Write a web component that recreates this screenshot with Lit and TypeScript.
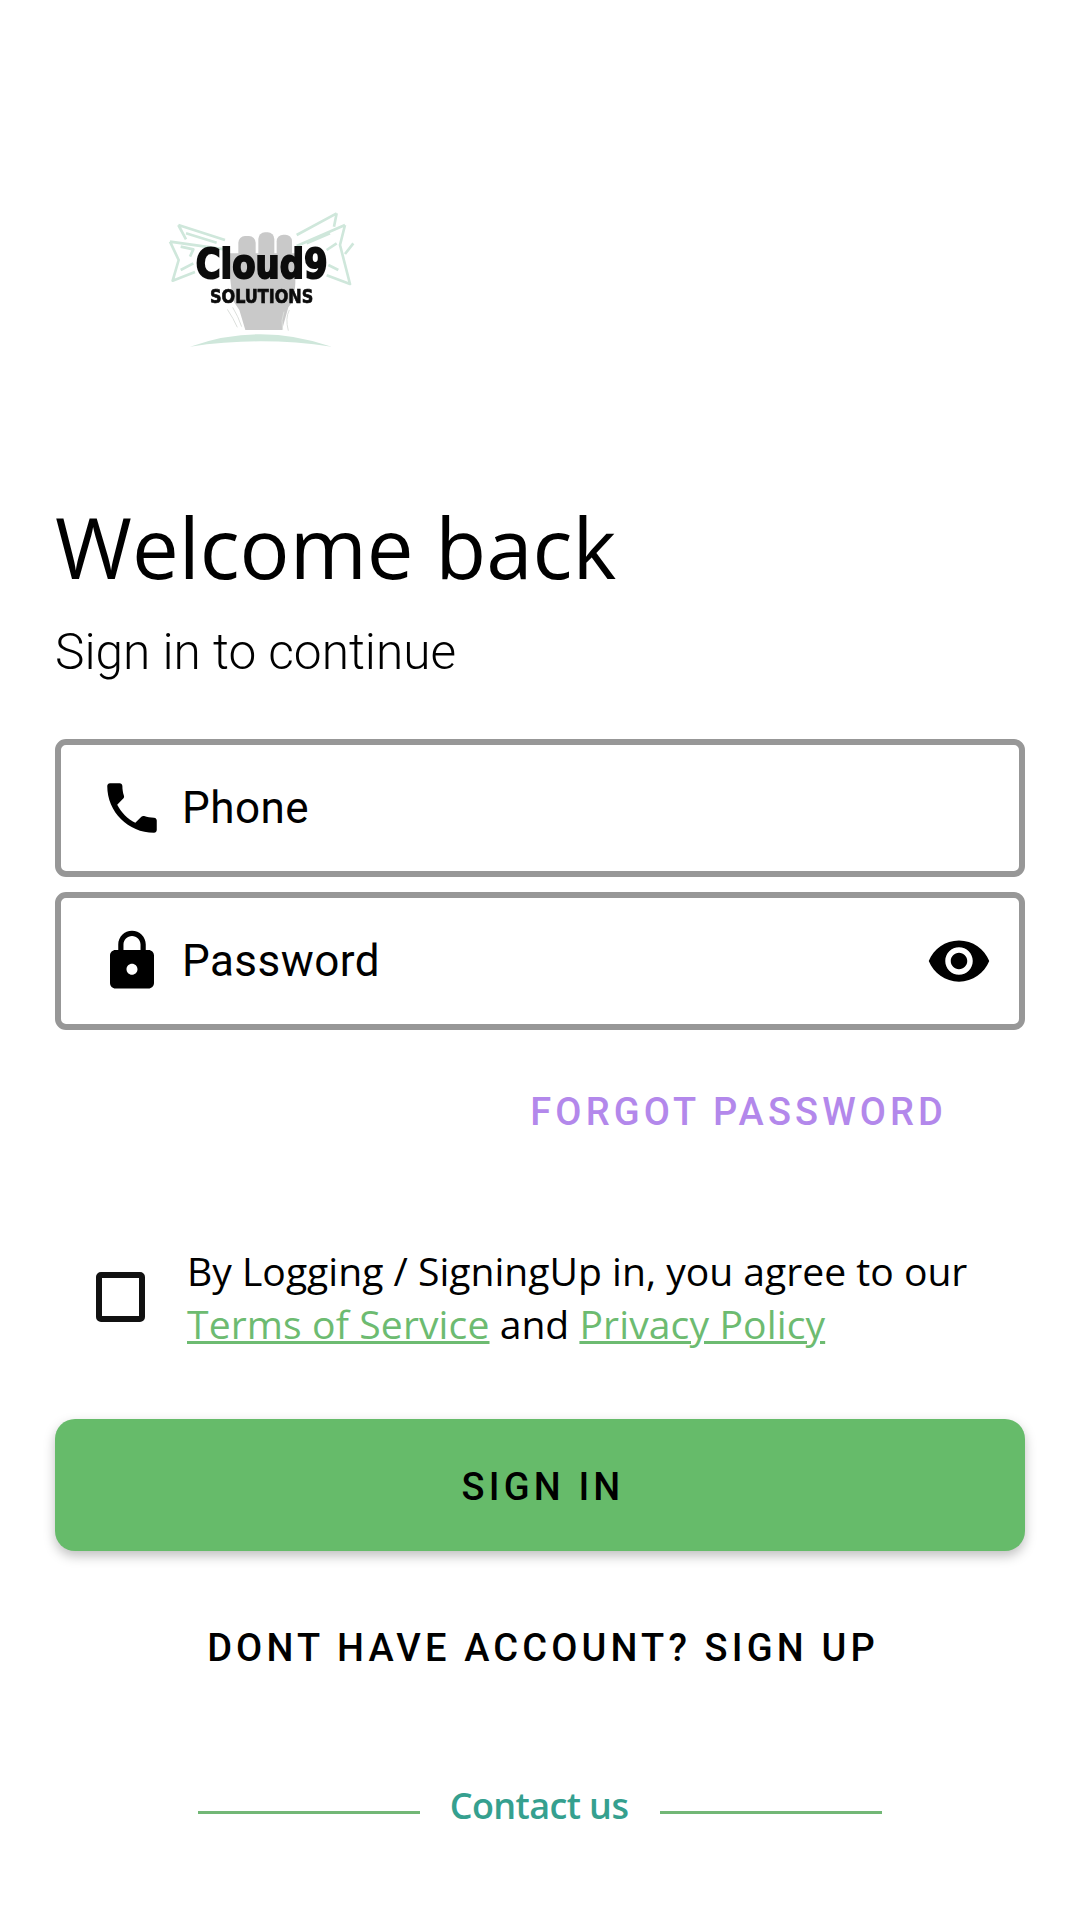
import { LitElement, html, css } from "lit";
import { customElement } from "lit/decorators.js";

@customElement("app-root")
export class AppRoot extends LitElement {
  static styles = css`
    :host { display: block; width: 1080px; height: 1920px; background: #fff; color: #000; overflow: hidden; font-family: "Roboto", sans-serif; }
    .page { display: flex; flex-direction: column; padding: 0 55px; height: 1920px; box-sizing: border-box; }
    .logo { display: block; flex: none; width: 220px; height: 170px; margin: 190px 0 0 95px; filter: blur(0.45px); }
    .logo text { font-family: "DejaVu Sans", sans-serif; font-weight: 700; text-anchor: middle; fill: #0c0c0c; }
    h1 { font: 400 83.3px/114px "Open Sans", sans-serif; margin: 130px 0 0 0; }
    .sub { font: 300 49.6px/64px "Roboto", sans-serif; margin-top: 16px; margin-bottom: -1px; }
    .field { height: 138px; flex: none; box-sizing: border-box; border: 6px solid #979797; border-radius: 11px; display: flex; align-items: center; padding-left: 38px; padding-right: 27px; }
    .f1 { margin-top: 56px; }
    .f2 { margin-top: 15px; }
    .field svg.lead { width: 66px; height: 66px; flex: none; margin-right: 17px; }
    .field span { font: 400 44px/50px "Roboto", sans-serif; letter-spacing: 0.45px; flex: 1; }
    .field svg.eye { width: 66px; height: 66px; flex: none; }
    .forgot { font: 500 38px/46px "Roboto", sans-serif; letter-spacing: 4.12px; color: #b388eb; text-align: right; margin: 59px 78px 0 0; }
    .agree { display: flex; align-items: center; margin-top: 109px; padding-left: 41px; }
    .box { width: 49px; height: 50px; box-sizing: border-box; border: 6px solid #111; border-radius: 5px; flex: none; margin-right: 42px; }
    .agree p { margin: 0; font: 400 39.1px/53px "Open Sans", sans-serif; }
    .agree a { color: #6dbb71; text-decoration: underline; letter-spacing: 0.12px; }
    .btn { height: 132px; flex: none; box-sizing: border-box; margin-top: 69px; padding: 4px 0 0 6px; border-radius: 20px; background: #66bb6a; box-shadow: 0 5px 12px rgba(0,0,0,.25); display: flex; align-items: center; justify-content: center; font: 500 38px/46px "Roboto", sans-serif; letter-spacing: 4.15px; }
    .signup { font: 500 38px/46px "Roboto", sans-serif; letter-spacing: 4.15px; text-align: center; margin-top: 74px; padding-left: 6px; }
    .contact { display: flex; align-items: center; justify-content: center; margin-top: 111px; }
    .contact i { display: block; width: 222px; height: 3px; background: #72b776; margin-top: 12px; }
    .contact b { font: 600 36px/48px "Open Sans", sans-serif; letter-spacing: -0.6px; color: #35a08f; width: 240px; text-align: center; padding-right: 2px; box-sizing: border-box; }
  `;

  render() {
    return html`
      <div class="page">
        <svg class="logo" viewBox="0 0 660 510">
          <g fill="none" stroke="#cfe7db" stroke-width="8" stroke-linejoin="round">
            <path d="M85 105 L225 150 M85 105 L108 148 M60 155 L225 178 M60 155 L86 210 L68 272 L135 246 M108 130 L200 158 M92 170 L130 178 L120 200 M92 240 L130 220"/>
            <path d="M560 70 L440 135 M560 70 L552 110 M585 105 L440 168 M585 105 L570 165 L600 282 L530 256 M610 160 L585 192 M540 130 L470 160 M560 160 L530 180 M565 240 L535 225"/>
          </g>
          <g fill="#c9c9c9">
            <rect x="265" y="138" width="52" height="110" rx="20"/>
            <rect x="325" y="127" width="48" height="120" rx="20"/>
            <rect x="380" y="134" width="46" height="110" rx="20"/>
            <path d="M232 190 H436 V280 L432 330 L415 352 L396 420 H286 L268 360 L248 330 Z"/>
          </g>
          <g fill="none" stroke="#dcdfdc" stroke-width="3">
            <path d="M232 358 Q250 385 262 412 M248 352 Q265 380 275 410 M402 365 Q392 390 398 420 M418 360 Q405 385 415 422"/>
          </g>
          <path d="M120 470 Q330 395 545 470 Q330 438 120 470 Z" fill="#cfe7db"/>
          <text x="335" y="265" font-size="122" stroke="#0c0c0c" stroke-width="6" textLength="396" lengthAdjust="spacingAndGlyphs">Cloud9</text>
          <text x="335" y="339" font-size="56" stroke="#0c0c0c" stroke-width="2" textLength="310" lengthAdjust="spacingAndGlyphs">SOLUTIONS</text>
        </svg>
        <h1>Welcome back</h1>
        <div class="sub">Sign in to continue</div>
        <div class="field f1">
          <svg class="lead" viewBox="0 0 24 24"><path d="M6.620 10.790c1.440 2.830 3.760 5.140 6.590 6.590l2.200-2.200c.27-.27.67-.36 1.020-.24 1.120.37 2.330.57 3.570.57.55 0 1 .45 1 1V20c0 .55-.45 1-1 1-9.390 0-17-7.610-17-17 0-.55.45-1 1-1h3.500c.55 0 1 .45 1 1 0 1.250.2 2.450.57 3.570.11.35.03.74-.25 1.020l-2.200 2.200z"/></svg>
          <span>Phone</span>
        </div>
        <div class="field f2">
          <svg class="lead" viewBox="0 0 24 24"><path d="M18 8h-1V6c0-2.760-2.240-5-5-5S7 3.240 7 6v2H6c-1.100 0-2 .9-2 2v10c0 1.100.9 2 2 2h12c1.100 0 2-.9 2-2V10c0-1.100-.9-2-2-2zm-6 9c-1.100 0-2-.9-2-2s.9-2 2-2 2 .9 2 2-.9 2-2 2zm3.100-9H8.900V6c0-1.710 1.390-3.100 3.100-3.100s3.100 1.390 3.100 3.100v2z"/></svg>
          <span>Password</span>
          <svg class="eye" viewBox="0 0 24 24"><path d="M12 4.500C7 4.500 2.730 7.610 1 12c1.730 4.390 6 7.500 11 7.500s9.270-3.110 11-7.500c-1.730-4.390-6-7.500-11-7.500zM12 17c-2.760 0-5-2.240-5-5s2.240-5 5-5 5 2.240 5 5-2.240 5-5 5zm0-8c-1.660 0-3 1.340-3 3s1.340 3 3 3 3-1.340 3-3-1.340-3-3-3z"/></svg>
        </div>
        <div class="forgot">FORGOT PASSWORD</div>
        <div class="agree">
          <div class="box"></div>
          <p>By Logging / SigningUp in, you agree to our<br><a>Terms of Service</a> and <a>Privacy Policy</a></p>
        </div>
        <div class="btn">SIGN IN</div>
        <div class="signup">DONT HAVE ACCOUNT? SIGN UP</div>
        <div class="contact"><i></i><b>Contact us</b><i></i></div>
      </div>
    `;
  }
}
